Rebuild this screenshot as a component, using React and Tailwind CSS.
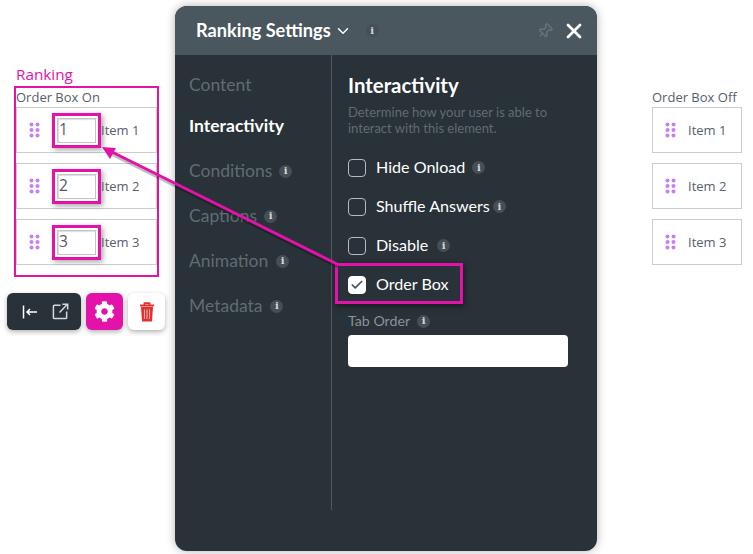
import React from "react";
import { ChevronDown, X, Pin, Check } from "lucide-react";
import { FaCog } from "react-icons/fa";

const Info = ({ className = "" }) => (
  <span className={`inline-flex w-[13px] h-[13px] rounded-full bg-[#454f55] text-[#d5d8da] items-center justify-center text-[10px] leading-none font-bold font-['DejaVu_Serif',serif] ${className}`}>i</span>
);

const Dots = () => (
  <svg width="11" height="16" viewBox="0 0 11 16" fill="#c77df5" className="shrink-0">
    {[2.5, 8, 13.5].map((y) => (
      <React.Fragment key={y}>
        <circle cx="2.5" cy={y} r="2" />
        <circle cx="8.5" cy={y} r="2" />
      </React.Fragment>
    ))}
  </svg>
);

const OnRow = ({ n, last }) => (
  <div className={`flex items-center h-[46px] border border-[#cccccc] pl-[12px] w-[141px] ${last ? "" : "mb-[10px]"}`}>
    <Dots />
    <div className="ml-[12px] w-[49px] h-[35px] border-[3px] border-[#e312a9] shadow-[2px_2px_5px_rgba(0,0,0,0.35)] bg-white p-[2px]">
      <div className="h-full border border-[#c4c4c4] shadow-[inset_1px_1px_1px_#ddd] pl-[1px] flex items-center text-[15.5px] text-[#4f5a65]">{n}</div>
    </div>
    <span className="pt-[1px] text-[13px] text-[#55606c]">Item {n}</span>
  </div>
);

const OffRow = ({ n, last }) => (
  <div className={`flex items-center h-[46px] border border-[#cccccc] pl-[12px] w-[90px] ${last ? "" : "mb-[10px]"}`}>
    <Dots />
    <span className="ml-[12px] pt-[1px] text-[13px] text-[#55606c]">Item {n}</span>
  </div>
);

const NavItem = ({ label, active, info, cls, mt }) => (
  <div className={`flex items-center h-[24px] text-[17.5px] ${mt} ${active ? "text-white font-bold" : "text-[#626b71]"}`}>
    <span>{label}</span>
    {info && <Info className={cls} />}
  </div>
);

const Box = ({ label, cls, checked }) => (
  <div className="flex items-center h-[39px]">
    <span className={`w-[18px] h-[18px] rounded-[4px] border flex items-center justify-center ${checked ? "bg-white border-white" : "border-[#b8bcbf]"}`}>
      {checked && <Check size={14} strokeWidth={3} className="text-[#4b5359]" />}
    </span>
    <span className="ml-[10px] text-[16.1px] text-white">{label}</span>
    {cls && <Info className={cls} />}
  </div>
);

export default function App() {
  return (
    <div className="relative w-[753px] h-[554px] bg-white overflow-hidden flex items-start font-['Open_Sans',sans-serif]">
      <div className="w-[175px] shrink-0 pl-[7px] pt-[65px]">
        <div className="ml-[9px] text-[15.3px] leading-[18px] text-[#e312a9]">Ranking</div>
        <div className="ml-[7px] mt-[3px] w-[145px] h-[191px] border-2 border-[#e312a9] flex flex-col">
          <div className="h-[19px] text-[13px] leading-[19px] text-[#55606c] whitespace-nowrap">Order Box On</div>
          <OnRow n={1} />
          <OnRow n={2} />
          <OnRow n={3} last />
        </div>
        <div className="mt-[16px] flex">
          <div className="w-[74px] h-[37px] rounded-[6px] bg-[#283238] shadow-[0_2px_5px_rgba(0,0,0,0.3)] flex items-center pl-[15px] gap-[14px]">
            <svg width="16" height="14" viewBox="0 0 16 14" fill="none" stroke="#fff" strokeWidth="1.5">
              <path d="M1.5 .5v13M15 7H5M8 4 5 7l3 3" />
            </svg>
            <svg width="17" height="17" viewBox="0 0 18 18" fill="none" stroke="#d5d8da" strokeWidth="1.6">
              <path d="M9 2.5H2.5a1 1 0 0 0-1 1v12a1 1 0 0 0 1 1h12a1 1 0 0 0 1-1V9M8 10l8-8.5M11 1.2h5.6v5.6" />
            </svg>
          </div>
          <div className="ml-[5px] w-[37px] h-[37px] rounded-[6px] bg-[#e312a9] shadow-[0_2px_5px_rgba(0,0,0,0.3)] flex items-center justify-center">
            <FaCog size={21} className="text-white" />
          </div>
          <div className="ml-[5px] w-[37px] h-[37px] rounded-[6px] bg-white shadow-[0_2px_5px_rgba(0,0,0,0.3)] flex items-center justify-center">
            <svg width="16" height="20" viewBox="0 0 16 20" fill="none">
              <path d="M1 3.5h14M5.5 3V1.2h5V3" stroke="#e5302e" strokeWidth="1.8" />
              <path d="M2 5h12l-1 14.5H3z" fill="#e5302e" />
              <path d="M5.5 7.5v9.5M8 7.5v9.5M10.5 7.5v9.5" stroke="#f9b5b3" strokeWidth="1" />
            </svg>
          </div>
        </div>
      </div>

      <div className="mt-[6px] w-[422px] h-[545px] shrink-0 rounded-[12px] overflow-hidden bg-[#283238] shadow-[0_0_10px_rgba(0,0,0,0.3)] font-['Lato',sans-serif]">
        <div className="h-[49px] bg-[#4a575e] flex items-center pl-[21px] pr-[11px]">
          <span className="text-[18.2px] font-bold text-white">Ranking Settings</span>
          <ChevronDown size={18} strokeWidth={2} className="ml-[3px] text-white" />
          <Info className="ml-[14px]" />
          <Pin size={16} className="ml-auto rotate-45 text-[#6b767c]" />
          <X size={24} strokeWidth={2.8} className="ml-[9px] text-white" />
        </div>
        <div className="flex">
          <div className="w-[157px] h-[455px] border-r border-[#4f5a60] pl-[14px] pt-[18px] shrink-0">
            <NavItem label="Content" />
            <NavItem label="Interactivity" active mt="mt-[17px]" />
            <NavItem label="Conditions" info cls="ml-[7px]" mt="mt-[21px]" />
            <NavItem label="Captions" info cls="ml-[7px]" mt="mt-[21px]" />
            <NavItem label="Animation" info cls="ml-[8px]" mt="mt-[21px]" />
            <NavItem label="Metadata" info cls="ml-[8px]" mt="mt-[21px]" />
          </div>
          <div className="pl-[16px] pt-[16px] w-[236px]">
            <div className="text-[20.4px] leading-[28px] font-bold text-white">Interactivity</div>
            <p className="mt-[5px] w-[220px] text-[13px] leading-[16px] text-[#626b71]">Determine how your user is able to interact with this element.</p>
            <div className="mt-[12px]">
              <Box label="Hide Onload" cls="ml-[7px]" />
              <Box label="Shuffle Answers" cls="ml-[3px]" />
              <Box label="Disable" cls="ml-[9px]" />
              <Box label="Order Box" checked />
            </div>
            <div className="mt-[8px] flex items-center h-[18px] text-[14.2px] text-[#8b9397]">
              <span>Tab Order</span>
              <Info className="ml-[7px]" />
            </div>
            <div className="mt-[5px] w-[220px] h-[32px] bg-white rounded-[4px]" />
          </div>
        </div>
      </div>

      <div className="pl-[55px] pt-[88px] shrink-0">
        <div className="h-[19px] text-[13px] leading-[18px] text-[#55606c] whitespace-nowrap">Order Box Off</div>
        <OffRow n={1} />
        <OffRow n={2} />
        <OffRow n={3} last />
      </div>

      <div className="absolute left-[335px] top-[263px] w-[128px] h-[41px] border-[3px] border-[#e312a9] shadow-[1px_2px_6px_rgba(0,0,0,0.5)]" />
      <svg className="absolute left-0 top-0 pointer-events-none" width="753" height="554" viewBox="0 0 753 554">
        <path d="M337 264 110 151" stroke="#000" strokeOpacity="0.25" strokeWidth="3" transform="translate(1 3)" />
        <path d="M337 264 110 151" stroke="#e312a9" strokeWidth="3" />
        <path d="M102 147 116 148 110 159z" fill="#e312a9" />
      </svg>
    </div>
  );
}
